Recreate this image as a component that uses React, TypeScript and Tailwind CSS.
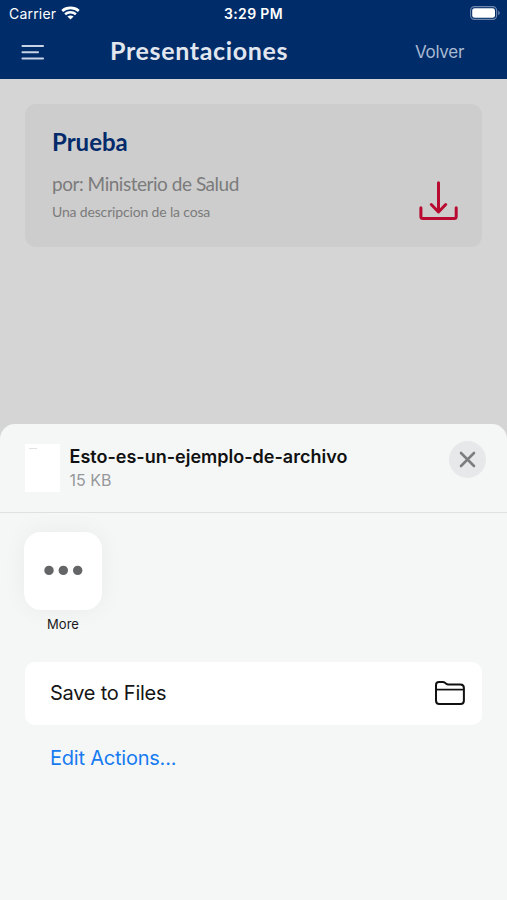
import React from "react"

const StatusBar = () => {
  return (
    <div className="relative flex h-[27px] items-center justify-between pl-[9px] pr-[7px] text-white">
      <div className="flex items-center gap-[5px]">
        <span className="text-[14px] leading-[27px] tracking-[0.2px]">Carrier</span>
        <svg width="19" height="14" viewBox="0 0 19 14" fill="none" className="-mt-px">
          <path d="M1.2 4.9C5.8.9 13.2.9 17.8 4.9" stroke="currentColor" strokeWidth="2.6" />
          <path d="M4.1 8.2C7.2 5.5 11.8 5.5 14.9 8.2" stroke="currentColor" strokeWidth="2.5" />
          <path d="M9.5 13.6 6.4 10.5C8.1 9 10.9 9 12.6 10.5Z" fill="currentColor" />
        </svg>
      </div>
      <span className="absolute left-1/2 -translate-x-1/2 whitespace-nowrap text-[14px] font-semibold leading-[27px] tracking-[0.35px]">
        3:29 PM
      </span>
      <svg width="30" height="14" viewBox="0 0 30 14" fill="none" className="-mt-px">
        <rect x="0.6" y="0.6" width="26" height="12.8" rx="3.8" stroke="#7187ad" strokeWidth="1.1" />
        <rect x="2.2" y="2.2" width="22.8" height="9.6" rx="2.4" fill="#fff" />
        <path d="M28.2 4.8C30.2 5.5 30.2 8.5 28.2 9.2Z" fill="#7187ad" />
      </svg>
    </div>
  )
}

const NavBar = () => {
  return (
    <nav className="flex h-[52px] items-start">
      <button className="ml-[21px] mt-[16px]" aria-label="Menu">
        <svg width="24" height="18" viewBox="0 0 24 18" fill="none" stroke="#c8d4e5" strokeWidth="2.1" strokeLinecap="round">
          <path d="M1.5 3H22M1.5 9.2H17M1.5 15.5H22" />
        </svg>
      </button>
      <h1 className="ml-[65px] mt-[6px] w-[180px] whitespace-nowrap font-['Lato'] text-[25px] font-bold leading-[34px] tracking-[0.65px] text-[#e1e6ef]">
        Presentaciones
      </h1>
      <button className="ml-[125px] mt-[13px] text-[17px] leading-6 tracking-[-0.3px] text-[#a9b9d1]">Volver</button>
    </nav>
  )
}

const DownloadIcon = () => {
  return (
    <svg width="40" height="40" viewBox="0 0 40 40" fill="none" stroke="#b90b31" strokeWidth="3" strokeLinecap="round" strokeLinejoin="round">
      <path d="M19.5 1.7V30.5M12.3 23.5 19.5 31 26.7 23.5" />
      <path d="M1.9 26.7V35.6Q1.9 37.6 3.9 37.6H35.2Q37.2 37.6 37.2 35.6V26.7" />
    </svg>
  )
}

const PresentationCard = () => {
  return (
    <article className="mx-[25px] flex h-[143px] justify-between rounded-[11px] bg-[#cdcdcd] pl-[27px] pr-[23px]">
      <div className="whitespace-nowrap font-['Lato'] text-[#7b7b7b]">
        <h2 className="mt-[22px] text-[24px] font-bold leading-[32px] text-[#032a6b]">Prueba</h2>
        <p className="mt-[13px] text-[19px] leading-[26px] tracking-[-0.47px]">por: Ministerio de Salud</p>
        <p className="mt-[5px] text-[14px] leading-[20px] tracking-[-0.16px]">Una descripcion de la cosa</p>
      </div>
      <button className="mt-[77px] h-10" aria-label="Descargar">
        <DownloadIcon />
      </button>
    </article>
  )
}

const FolderIcon = () => {
  return (
    <svg width="32" height="26" viewBox="0 0 32 26" fill="none" stroke="#111" strokeWidth="2" strokeLinejoin="round">
      <path d="M2 5Q2 2 5 2H8.8Q10 2 11 2.8L12.2 3.8Q13 4.5 14.3 4.5H26.5Q29.9 4.5 29.9 8V20.5Q29.9 24 26.5 24H5.4Q2 24 2 20.5Z" />
      <path d="M2 9.6H29.9" strokeWidth="1.7" />
    </svg>
  )
}

const ShareSheet = () => {
  return (
    <section className="h-[476px] rounded-t-[15px] bg-[#f5f7f7]">
      <header className="flex h-[89px] items-start border-b border-[#dfe1e1] pl-[25px] pr-[21px]">
        <div className="mt-5 h-12 w-[35px] bg-white pl-1 pt-1">
          <div className="h-px w-2 bg-[#e2e2e2]" />
        </div>
        <div className="ml-[9.5px] mt-5 grow whitespace-nowrap">
          <p className="text-[18px] font-semibold leading-[26px] text-[#111]">Esto-es-un-ejemplo-de-archivo</p>
          <p className="text-[16px] leading-[20px] text-[#96989a]">15 KB</p>
        </div>
        <button className="mt-[17px] flex size-[37px] items-center justify-center rounded-full bg-[#e6e8e9]" aria-label="Close">
          <svg width="17" height="17" viewBox="0 0 17 17" stroke="#7c7e80" strokeWidth="2.6" strokeLinecap="round">
            <path d="M2 2 15 15M15 2 2 15" />
          </svg>
        </button>
      </header>

      <div className="ml-6 mt-[19px] flex w-[78px] flex-col items-center">
        <button className="flex size-[78px] items-center justify-center rounded-[17px] bg-white shadow-[0_0_24px_rgba(0,0,0,0.05)]" aria-label="More">
          <svg width="40" height="12" viewBox="0 0 40 12" fill="#636567">
            <circle cx="6" cy="5.4" r="4.7" />
            <circle cx="20.3" cy="5.4" r="4.7" />
            <circle cx="34.7" cy="5.4" r="4.7" />
          </svg>
        </button>
        <span className="mt-1 text-[13px] leading-5 text-[#191919]">More</span>
      </div>

      <button className="mx-[25px] mt-7 flex h-[63px] w-[457px] items-center justify-between rounded-[10px] bg-white pl-[25px] pr-4 text-[20px] tracking-[-0.25px] text-[#151515]">
        <span className="-mt-0.5">Save to Files</span>
        <span className="-mt-px">
          <FolderIcon />
        </span>
      </button>
      <button className="ml-[50px] mt-[18px] block text-[20px] leading-[30px] tracking-[-0.22px] text-[#167bf1]">Edit Actions...</button>
    </section>
  )
}

function App() {
  return (
    <div className="h-[900px] w-full overflow-hidden bg-[#d5d5d5] font-['Inter',sans-serif]">
      <div className="h-[79px] bg-[#002c69]">
        <StatusBar />
        <NavBar />
      </div>
      <main className="h-[345px] pt-[25px]">
        <PresentationCard />
      </main>
      <ShareSheet />
    </div>
  )
}

export default App
